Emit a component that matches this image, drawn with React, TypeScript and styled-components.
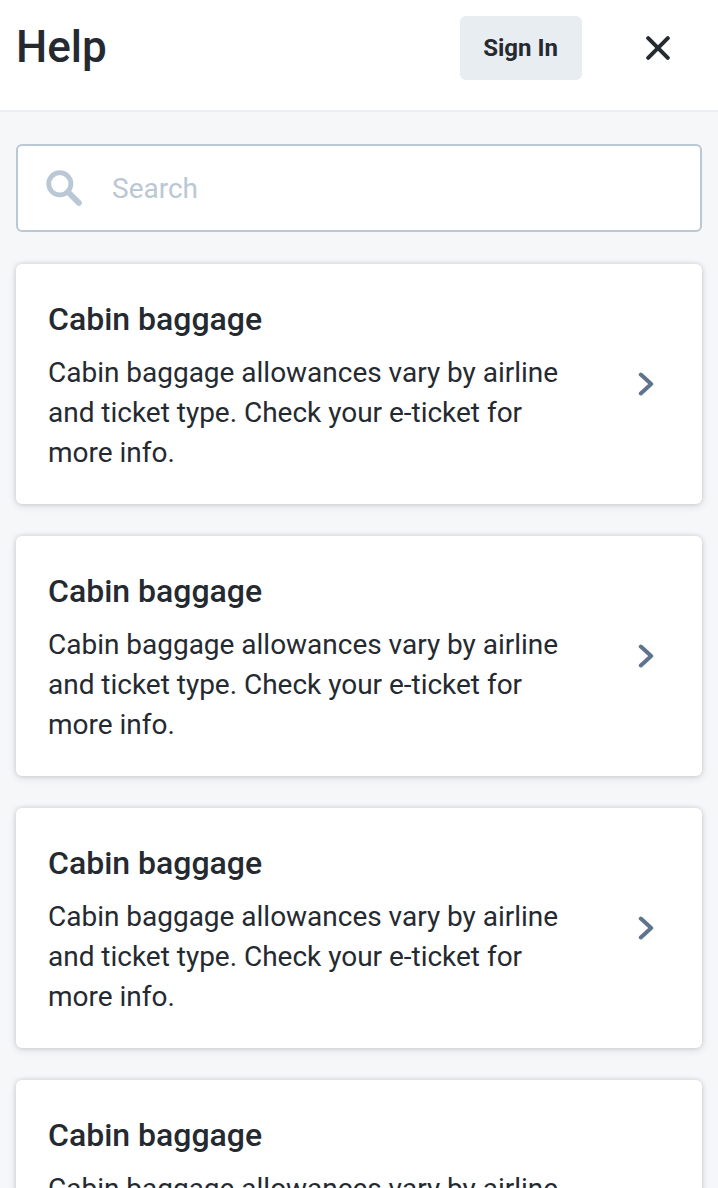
import React from 'react';
import styled, { createGlobalStyle } from 'styled-components';

const GlobalStyle = createGlobalStyle`
  *, *::before, *::after { box-sizing: border-box; }
  html, body { margin: 0; height: 100%; overflow: hidden; background: #f5f7f9; }
  body { font-family: Roboto, sans-serif; color: #252a31; }
  h1, h2, p { margin: 0; }
`;

const Header = styled.header`
  display: flex;
  align-items: flex-start;
  height: 112px;
  padding: 16px;
  background: #fff;
  border-bottom: 2px solid #eaeff3;
`;

const Title = styled.h1`
  flex: 1;
  font-size: 44px;
  line-height: 62px;
  font-weight: 500;
`;

const SignInButton = styled.button`
  width: 122px;
  height: 64px;
  padding: 0 1px 0 0;
  border: 0;
  border-radius: 6px;
  background: #e8edf1;
  color: #252a31;
  font: 700 24px/64px Roboto, sans-serif;
`;

const CloseButton = styled.button`
  display: flex;
  align-items: center;
  justify-content: center;
  width: 88px;
  height: 64px;
  margin: 0 0 0 32px;
  padding: 0;
  border: 0;
  background: none;
  color: #252a31;
`;

const Content = styled.main`
  display: flex;
  flex-direction: column;
  gap: 32px;
  padding: 32px 16px;
`;

const SearchField = styled.label`
  display: flex;
  align-items: center;
  height: 88px;
  padding: 0 28px;
  border: 2px solid #bac7d5;
  border-radius: 6px;
  background: #fff;
  color: #bac7d5;
`;

const SearchInput = styled.input`
  flex: 1;
  min-width: 0;
  height: 84px;
  margin-left: 30px;
  padding: 1px 0 0;
  border: 0;
  outline: 0;
  background: none;
  color: #252a31;
  font: 400 28px/33px Roboto, sans-serif;
  &::placeholder { color: #bac7d5; opacity: 1; }
`;

const Card = styled.article`
  display: flex;
  align-items: center;
  justify-content: space-between;
  flex: none;
  height: 240px;
  padding: 32px 48px 32px 32px;
  border-radius: 6px;
  background: #fff;
  box-shadow: 0 0 4px rgba(37, 42, 49, 0.16), 0 2px 8px rgba(37, 42, 49, 0.12);
`;

const CardText = styled.div`
  width: 530px;
`;

const CardTitle = styled.h2`
  margin-bottom: 10px;
  font-size: 32px;
  line-height: 48px;
  font-weight: 500;
`;

const CardBody = styled.p`
  font-size: 28px;
  line-height: 40px;
  letter-spacing: -0.015px;
`;

const topics = [1, 2, 3, 4];

export default function App() {
  return (
    <>
      <GlobalStyle />
      <Header>
        <Title>Help</Title>
        <SignInButton>Sign In</SignInButton>
        <CloseButton aria-label="Close">
          <svg width="24" height="24" viewBox="0 0 24 24" fill="none" stroke="currentColor" strokeWidth="4" strokeLinecap="round">
            <path d="M2.2 2.2l19.6 19.6M21.8 2.2l-19.6 19.6" />
          </svg>
        </CloseButton>
      </Header>
      <Content>
        <SearchField>
          <svg width="36" height="36" viewBox="0 0 36 36" fill="none" stroke="currentColor">
            <circle cx="13.8" cy="13.8" r="11.1" strokeWidth="4.8" />
            <path d="M22 22l10.9 10.9" strokeWidth="5.8" strokeLinecap="round" />
          </svg>
          <SearchInput placeholder="Search" />
        </SearchField>
        {topics.map((id) => (
          <Card key={id}>
            <CardText>
              <CardTitle>Cabin baggage</CardTitle>
              <CardBody>Cabin baggage allowances vary by airline and ticket type. Check your e-ticket for more info.</CardBody>
            </CardText>
            <svg width="16" height="24" viewBox="0 0 16 24" fill="none" stroke="#5f738c" strokeWidth="4" strokeLinecap="round" strokeLinejoin="round">
              <path d="M2.8 2.6l10.4 9.4-10.4 9.4" />
            </svg>
          </Card>
        ))}
      </Content>
    </>
  );
}
